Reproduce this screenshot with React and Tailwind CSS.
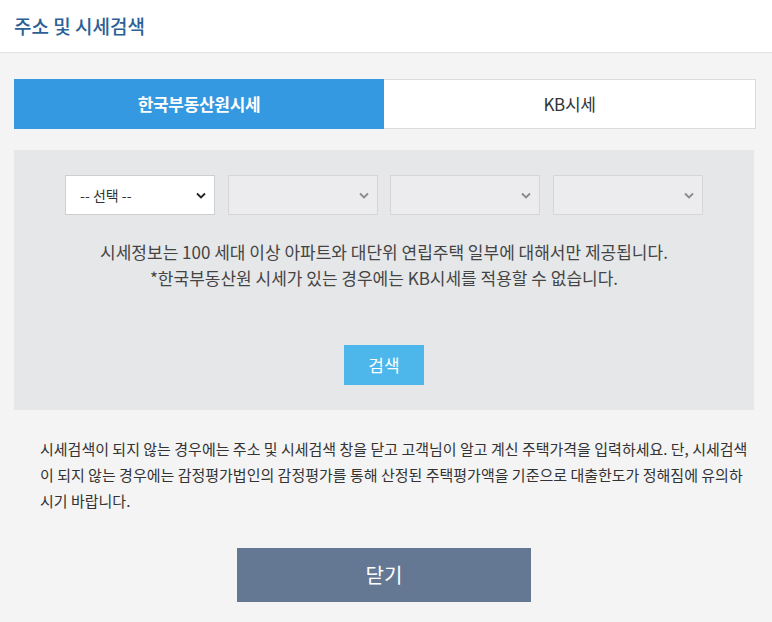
import React from "react";

const Chevron = ({ color }) => (
  <svg width="10" height="7" viewBox="0 0 10 7" fill="none">
    <path d="M1 1.5 L5 5.5 L9 1.5" stroke={color} strokeWidth="1.8" />
  </svg>
);

function Select({ label, active }) {
  return (
    <div
      className={
        "w-[150px] h-[40px] flex items-center justify-between pl-[14px] pr-[8px] border " +
        (active ? "bg-white border-[#cfcfcf]" : "bg-[#ececee] border-[#d6d6d8]")
      }
    >
      <span className="text-[14px] text-[#333]">{label}</span>
      <Chevron color={active ? "#222" : "#8a8a8a"} />
    </div>
  );
}

export default function App() {
  return (
    <div
      className="w-[772px] h-[622px] bg-[#f4f4f4] flex flex-col"
      style={{ fontFamily: '"Noto Sans CJK KR", "Noto Sans", sans-serif' }}
    >
      <div className="h-[53px] bg-white border-b border-[#e2e2e2] flex items-center px-[14px] shrink-0">
        <h1 className="text-[19px] text-[#2b5f96] font-medium">주소 및 시세검색</h1>
      </div>
      <div className="pl-[14px] pr-[16px] pt-[26px] flex flex-col">
        <div className="flex h-[50px]">
          <div className="w-[370px] bg-[#3499e0] flex items-center justify-center text-white text-[17px] font-bold tracking-[-0.3px]">
            한국부동산원시세
          </div>
          <div className="flex-1 bg-white border border-[#dcdcdc] border-l-0 flex items-center justify-center text-[#333] text-[17px] tracking-[-0.3px]">
            KB시세
          </div>
        </div>
        <div className="mt-[21px] mr-[2px] h-[260px] bg-[#e6e7e9] flex flex-col items-center pt-[25px]">
          <div className="flex gap-[12.6px]">
            <Select label="-- 선택 --" active />
            <Select label="" />
            <Select label="" />
            <Select label="" />
          </div>
          <div className="mt-[24px] text-center text-[17px] leading-[26px] text-[#444]">
            <p>시세정보는 100 세대 이상 아파트와 대단위 연립주택 일부에 대해서만 제공됩니다.</p>
            <p>*한국부동산원 시세가 있는 경우에는 KB시세를 적용할 수 없습니다.</p>
          </div>
          <button className="mt-[54px] w-[80px] h-[40px] bg-[#4db7ec] text-white text-[17px]">검색</button>
        </div>
      </div>
      <p className="mt-[26px] pl-[40px] pr-[18px] text-[15px] leading-[26px] text-[#333]">
        시세검색이 되지 않는 경우에는 주소 및 시세검색 창을 닫고 고객님이 알고 계신 주택가격을 입력하세요. 단, 시세검색이 되지 않는 경우에는 감정평가법인의 감정평가를 통해 산정된 주택평가액을 기준으로 대출한도가 정해짐에 유의하시기 바랍니다.
      </p>
      <div className="flex justify-center mt-[34px] pr-[4px]">
        <button className="w-[294px] h-[54px] bg-[#647893] text-white text-[20px]">닫기</button>
      </div>
    </div>
  );
}
